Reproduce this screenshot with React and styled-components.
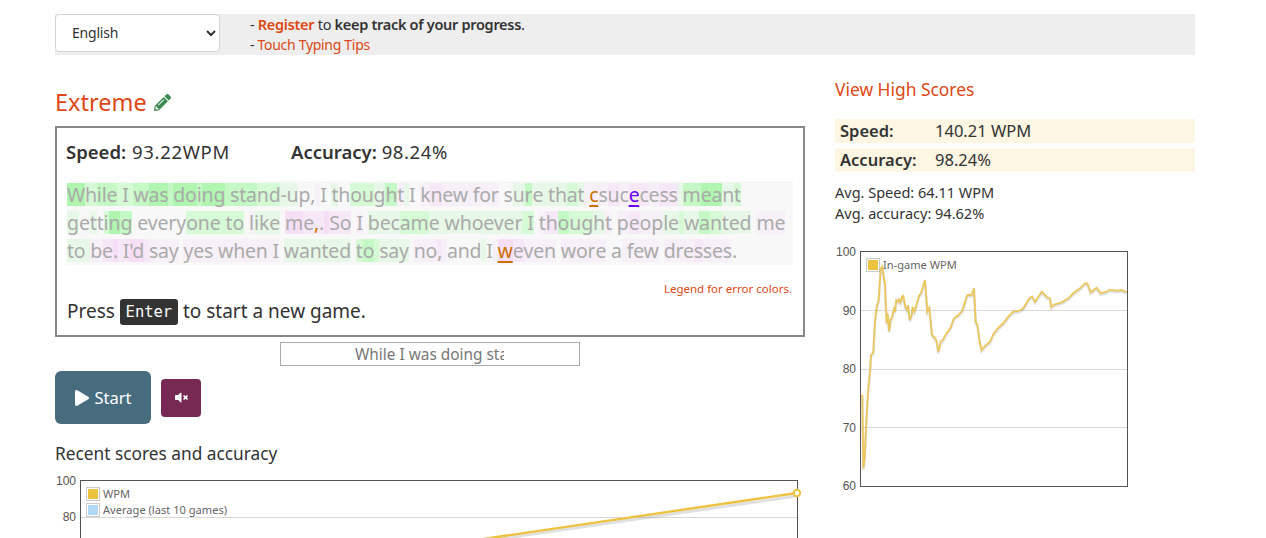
import React from "react";
import styled, { createGlobalStyle } from "styled-components";
import { FaPencilAlt, FaPlay, FaVolumeMute } from "react-icons/fa";

const FONT = '"Noto Sans", "Open Sans", sans-serif';
const ORANGE = "#dd4814";

const Global = createGlobalStyle`
  html, body { margin: 0; padding: 0; background: #fff; overflow: hidden; height: 538px; }
  body { font-family: ${FONT}; color: #333; }
`;

const Page = styled.div`
  width: 1140px;
  height: 524px;
  padding: 14px 0 0 55px;
  overflow: hidden;
`;
const TopBar = styled.div`
  display: flex;
  height: 41px;
  background: #eee;
`;
const LangSelect = styled.select`
  width: 165px;
  height: 38px;
  padding: 0 12px 2px;
  font: 14px ${FONT};
  letter-spacing: -0.2px;
  color: #333;
  background: #fff;
  border: 1px solid #ced4da;
  border-radius: 4px;
`;
const Notes = styled.div`
  margin-left: 30px;
  letter-spacing: -0.3px;
`;
const NoteLine = styled.div`
  height: 20px;
  line-height: ${(p) => (p.$small ? "22px" : "20px")};
  font-size: ${(p) => (p.$small ? "14px" : "14.5px")};
`;
const Link = styled.a`
  color: ${ORANGE};
  font-weight: ${(p) => (p.$bold ? 600 : 400)};
`;
const Strong = styled.span`
  font-weight: 600;
`;
const Columns = styled.div`
  display: grid;
  grid-template-columns: 750px 360px;
  column-gap: 30px;
`;
const Left = styled.div`
  padding-top: 32px;
`;
const Title = styled.div`
  display: flex;
  align-items: center;
  gap: 7px;
  height: 30px;
  margin-bottom: 9px;
  font-size: 23.5px;
  color: ${ORANGE};
  svg { color: #3c8a50; font-size: 17px; }
`;
const Box = styled.div`
  box-sizing: border-box;
  height: 211px;
  border: 2px solid #888;
  padding: 10px 10px 0 9px;
`;
const Stats = styled.div`
  display: flex;
  height: 28px;
  line-height: 28px;
  font-size: 18.5px;
`;
const Stat = styled.div`
  width: 225px;
`;
const StatValue = styled.span`
  letter-spacing: ${(p) => p.$track}px;
  margin-left: ${(p) => p.$shift}px;
`;
const Typed = styled.div`
  height: 84px;
  margin: 15px 0 0 1px;
  background: #f8f8f8;
  color: #aaa;
  font-size: 19.5px;
`;
const TextLine = styled.div`
  height: 28px;
  white-space: pre;
  letter-spacing: ${(p) => p.$track}px;
`;
const LEVELS = {
  0: "transparent",
  1: "#e8f8e8",
  2: "#d6f9d6",
  3: "#c4f8c4",
  4: "#b0f6b0",
  a: "#f7f0f9",
  b: "#f7e8f7",
  c: "#f6dff6",
};
const Run = styled.span`
  display: inline-block;
  height: 23px;
  line-height: 23px;
  background: ${(p) => LEVELS[p.$lvl]};
  color: ${(p) => p.$err || "inherit"};
  text-decoration: ${(p) => (p.$under ? "underline" : "none")};
  text-decoration-thickness: 2px;
  text-underline-offset: 3px;
`;
const Legend = styled.a`
  display: block;
  margin-top: 16px;
  height: 16px;
  line-height: 16px;
  text-align: right;
  font-size: 11.5px;
  color: ${ORANGE};
  padding-right: 1px;
`;
const Press = styled.div`
  height: 28px;
  line-height: 28px;
  font-size: 19px;
  display: flex;
  align-items: flex-end;
  padding-left: 1px;
`;
const Key = styled.kbd`
  display: inline-block;
  height: 26px;
  width: 58px;
  margin: 0 5px;
  background: #333;
  color: #fff;
  border-radius: 3px;
  font: 15.5px/27px "DejaVu Sans Mono", monospace;
  text-align: center;
`;
const InputRow = styled.div`
  display: flex;
  justify-content: center;
  margin-top: 5px;
`;
const TypeInput = styled.input`
  box-sizing: border-box;
  width: 300px;
  height: 24px;
  padding: 0 75px 0 74px;
  border: 1px solid #aaa;
  font: 15.4px ${FONT};
  color: #777;
  outline: none;
  border-radius: 0;
`;
const Buttons = styled.div`
  display: flex;
  align-items: center;
  gap: 10px;
  margin-top: 5px;
  height: 53px;
`;
const StartBtn = styled.button`
  display: flex;
  align-items: center;
  justify-content: center;
  gap: 4px;
  width: 96px;
  height: 53px;
  border: 0;
  border-radius: 6px;
  background: #476c7d;
  color: #fff;
  font: 16.5px ${FONT};
  padding: 0;
  svg { font-size: 16px; }
`;
const MuteBtn = styled.button`
  display: flex;
  align-items: center;
  justify-content: center;
  width: 40px;
  height: 38px;
  border: 0;
  border-radius: 4px;
  background: #772953;
  color: #fff;
  padding: 0;
  svg { font-size: 13px; }
`;
const Heading = styled.div`
  margin-top: 18px;
  height: 24px;
  line-height: 24px;
  font-size: 17.3px;
`;
const Right = styled.div`
  padding-top: 22px;
`;
const HighLink = styled.a`
  display: block;
  height: 24px;
  line-height: 24px;
  font-size: 17.4px;
  color: ${ORANGE};
`;
const ScoreRows = styled.div`
  display: flex;
  flex-direction: column;
  gap: 5px;
  margin-top: 18px;
`;
const ScoreRow = styled.div`
  display: grid;
  grid-template-columns: 95px 1fr;
  height: 24px;
  line-height: 24px;
  padding-left: 5px;
  background: #fdf6e3;
  font-size: 16.5px;
`;
const AvgBlock = styled.div`
  margin-top: 10px;
`;
const Avg = styled.div`
  height: 21px;
  line-height: 21px;
  font-size: 14.5px;
`;
const ChartSvg = styled.svg`
  display: block;
  margin-top: ${(p) => p.$top}px;
`;
const AxisText = styled.text`
  font: 12px "Liberation Sans", Arial, sans-serif;
  fill: #545454;
  text-anchor: end;
`;
const LegendText = styled.text`
  font: 11.1px ${FONT};
  fill: #666;
`;

const A = "a";
const B = "b";
const C = "c";
const ERR = "#cc6f00";
const lines = [
  { track: -0.2, runs: [["W",4],["h",2],["ile",3],[" I ",2],["w",3],["as",4],[" ",3],["do",4],["i",3],["ng",4],[" ",3],["sta",3],["n",2],["d",2],["-u",1],["p,",0],[" ",A],["I",0],[" ",0],["t",1],["h",0],["ou",2],["g",1],["h",3],["t",A],[" ",1],["I ",0],["k",A],["n",B],["ew for",A],[" ",0],["s",0],["u",1],["r",3],["e",1],[" ",1],["th",1],["a",2],["t",1],[" ",A],["c",A,ERR,1],["s",A],["u",B],["c",A],["e",B,"#6a00f4",1],["c",B],["e",A],["ss",B],[" ",1],["m",3],["ea",4],["n",1],["t",2]] },
  { track: -0.13, runs: [["g",1],["e",0],["t",1],["t",0],["i",2],["n",4],["g",3],[" ",0],["every",0],["o",2],["ne",2],[" ",2],["t",2],["o",2],[" ",0],["l",A],["i",1],["ke",1],[" ",0],["m",C],["e",B],[",",B,ERR],[".",B],[" ",C],["So",B],[" ",0],["I",A],[" ",0],["b",1],["ec",1],["a",2],["m",2],["e whoever",1],[" ",2],["I",2],[" ",0],["t",A],["h",B],["o",3],["u",2],["g",2],["h",1],["t",A],[" ",0],["p",A],["e",B],["op",A],["le",1],[" ",2],["w",1],["a",3],["n",2],["ted",1],[" ",0],["me",A]] },
  { track: -0.2, runs: [["to",1],[" ",1],["b",A],["e",B],[".",C],[" ",B],["I",B],["'d",C],[" ",B],["say",A],[" ",0],["yes when I",A],[" ",0],["wa",1],["nted",1],[" ",0],["t",2],["o",3],[" ",2],["s",1],["ay",1],[" ",0],["no",A],[",",B],[" ",A],["and",0],[" ",1],["I",0],[" ",A],["w",C,ERR,1],["e",B],["ve",A],["n",A],[" ",0],["w",A],["or",A],["e",A],[" ",0],["a",0],[" ",A],["few",A],[" ",0],["dre",A],["s",B],["ses",A],[".",0]] },
];

const z7 = [[93,450],[97,452],[100,670],[104,640],[108,548],[114,440],[120,380],[123,330],[130,322],[135,230],[140,185],[146,165],[152,70],[157,65],[165,120],[170,235],[173,205],[177,258],[182,222],[186,218],[192,192],[195,200],[199,165],[205,170],[208,163],[212,172],[216,155],[220,153],[226,185],[232,195],[234,180],[239,225],[245,210],[248,185],[253,200],[258,185],[268,150],[273,145],[285,105],[292,200],[298,188],[306,270],[316,280],[320,290],[325,320],[332,290],[340,283],[345,272],[355,258],[362,247],[372,220],[385,210],[396,198],[412,150],[424,150]];
const z8 = [[5,150],[12,130],[17,232],[22,238],[30,295],[35,315],[45,303],[60,290],[70,268],[85,248],[100,235],[115,215],[130,200],[148,197],[160,190],[178,160],[187,155],[195,170],[215,140],[225,150],[232,157],[240,160],[244,185],[255,178],[275,172],[295,160],[310,145],[330,130],[345,115],[352,115],[362,142],[380,128],[392,145],[410,140],[420,134],[440,137],[455,135],[470,141]];
const gamePts = [
  ...z7.map(([x, y]) => [830 + x / 3 - 835, 245 + y / 3 - 244]),
  ...z8.map(([x, y]) => [970 + x / 3 - 835, 245 + y / 3 - 244]),
].map((p) => p.map((n) => n.toFixed(1)).join(",")).join(" ");

const Swatch = ({ x, y, color }) => (
  <g>
    <rect x={x + 0.5} y={y + 0.5} width="13" height="13" fill="#fff" stroke="#ccc" />
    <rect x={x + 2} y={y + 2} width="10" height="10" fill={color} />
  </g>
);

export default function App() {
  return (
    <>
      <Global />
      <Page>
        <TopBar>
          <LangSelect defaultValue="English">
            <option>English</option>
          </LangSelect>
          <Notes>
            <NoteLine>
              - <Link $bold>Register</Link> to <Strong>keep track of your progress</Strong>.
            </NoteLine>
            <NoteLine $small>
              - <Link>Touch Typing Tips</Link>
            </NoteLine>
          </Notes>
        </TopBar>
        <Columns>
          <Left>
            <Title>
              Extreme <FaPencilAlt />
            </Title>
            <Box>
              <Stats>
                <Stat>
                  <Strong>Speed:</Strong> <StatValue $track={0.7} $shift={1}>93.22WPM</StatValue>
                </Stat>
                <Stat>
                  <Strong>Accuracy:</Strong> <StatValue $track={0.6} $shift={0}>98.24%</StatValue>
                </Stat>
              </Stats>
              <Typed>
                {lines.map((line, i) => (
                  <TextLine key={i} $track={line.track}>
                    {line.runs.map(([t, l, err, under], j) => (
                      <Run key={j} $lvl={l} $err={err} $under={under}>
                        {t}
                      </Run>
                    ))}
                  </TextLine>
                ))}
              </Typed>
              <Legend>Legend for error colors.</Legend>
              <Press>
                Press <Key>Enter</Key> to start a new game.
              </Press>
            </Box>
            <InputRow>
              <TypeInput readOnly value="While I was doing stand-up" />
            </InputRow>
            <Buttons>
              <StartBtn>
                <FaPlay /> Start
              </StartBtn>
              <MuteBtn>
                <FaVolumeMute />
              </MuteBtn>
            </Buttons>
            <Heading>Recent scores and accuracy</Heading>
            <ChartSvg $top={6} width="750" height="80" viewBox="0 0 750 80">
              <line x1="25" x2="743" y1="45.5" y2="45.5" stroke="#d8d8d8" />
              <rect x="25.5" y="8.5" width="717" height="90" fill="none" stroke="#545454" />
              <AxisText x="21" y="13">100</AxisText>
              <AxisText x="21" y="49">80</AxisText>
              <Swatch x={31} y={15} color="#edc240" />
              <Swatch x={31} y={31} color="#afd8f8" />
              <LegendText x="48" y="26">WPM</LegendText>
              <LegendText x="48" y="42">Average (last 10 games)</LegendText>
              <line x1="360" y1="79" x2="742" y2="24" stroke="rgba(0,0,0,.12)" strokeWidth="3" />
              <line x1="360" y1="77" x2="742" y2="21" stroke="#edc240" strokeWidth="2.4" />
              <circle cx="742" cy="21" r="3.2" fill="#fff" stroke="#edc240" strokeWidth="2" />
            </ChartSvg>
          </Left>
          <Right>
            <HighLink>View High Scores</HighLink>
            <ScoreRows>
              <ScoreRow>
                <Strong>Speed:</Strong>
                <span>140.21 WPM</span>
              </ScoreRow>
              <ScoreRow>
                <Strong>Accuracy:</Strong>
                <span>98.24%</span>
              </ScoreRow>
            </ScoreRows>
            <AvgBlock>
              <Avg>Avg. Speed: 64.11 WPM</Avg>
              <Avg>Avg. accuracy: 94.62%</Avg>
            </AvgBlock>
            <ChartSvg $top={20} width="360" height="250" viewBox="0 0 360 250">
              {[66.5, 125.5, 183.5].map((y) => (
                <line key={y} x1="25" x2="293" y1={y} y2={y} stroke="#d8d8d8" />
              ))}
              <rect x="25.5" y="7.5" width="267" height="235" fill="none" stroke="#545454" />
              <AxisText x="21" y="12">100</AxisText>
              <AxisText x="21" y="71">90</AxisText>
              <AxisText x="21" y="129">80</AxisText>
              <AxisText x="21" y="188">70</AxisText>
              <AxisText x="21" y="246">60</AxisText>
              <Swatch x={31} y={14} color="#edc240" />
              <LegendText x="48" y="25">In-game WPM</LegendText>
              <polyline points={gamePts} fill="none" stroke="rgba(0,0,0,.12)" strokeWidth="2.5" transform="translate(0,1.5)" />
              <polyline points={gamePts} fill="none" stroke="#ebc75e" strokeWidth="1.8" />
            </ChartSvg>
          </Right>
        </Columns>
      </Page>
    </>
  );
}
